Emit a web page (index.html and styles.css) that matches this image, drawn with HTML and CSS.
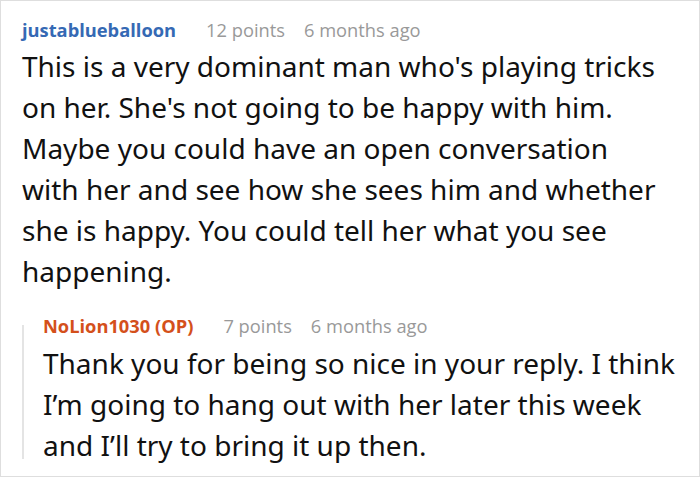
FILE: index.html
```html
<!DOCTYPE html>
<html>
<head>
<meta charset="utf-8">
<link rel="stylesheet" href="styles.css">
</head>
<body>
<div class="frame">
  <div class="comment">
    <div class="meta">
      <span class="author">justablueballoon</span>
      <span class="info">12 points</span>
      <span class="info">6 months ago</span>
    </div>
    <p class="text">This is a very dominant man who's playing tricks on her. She's not going to be happy with him. Maybe you could have an open conversation with her and see how she sees him and whether she is happy. You could tell her what you see happening.</p>
  </div>
  <div class="reply">
    <div class="meta">
      <span class="author op">NoLion1030 (OP)</span>
      <span class="info">7 points</span>
      <span class="info">6 months ago</span>
    </div>
    <p class="text">Thank you for being so nice in your reply. I think I’m going to hang out with her later this week and I’ll try to bring it up then.</p>
  </div>
</div>
</body>
</html>
```
FILE: styles.css
```css
html, body {
  margin: 0;
  padding: 0;
  background: #fff;
}
.frame {
  box-sizing: border-box;
  width: 700px;
  height: 477px;
  border: 1px solid #dedede;
  padding: 17px 4px 0 21px;
  font-family: "Noto Sans", "Open Sans", sans-serif;
  color: #111;
}
.meta {
  display: flex;
  gap: 19px;
  font-family: "Open Sans", "Noto Sans", sans-serif;
  font-size: 18.3px;
  line-height: 24px;
}
.author {
  font-weight: 700;
  color: #3569b4;
  margin-right: 11px;
}
.author.op {
  color: #d4501b;
}
.info {
  color: #999;
}
.text {
  margin: 4px 0 0;
  font-size: 28px;
  line-height: 41px;
}
.comment .text {
  max-width: 647px;
}
.reply {
  display: flow-root;
  margin-top: 33px;
  border-left: 2px solid #e4e4e4;
  padding-left: 19px;
}
.reply .meta {
  margin-top: -11px;
}
.reply .text {
  margin: 5px 0 -7px;
  max-width: 642px;
}
```
